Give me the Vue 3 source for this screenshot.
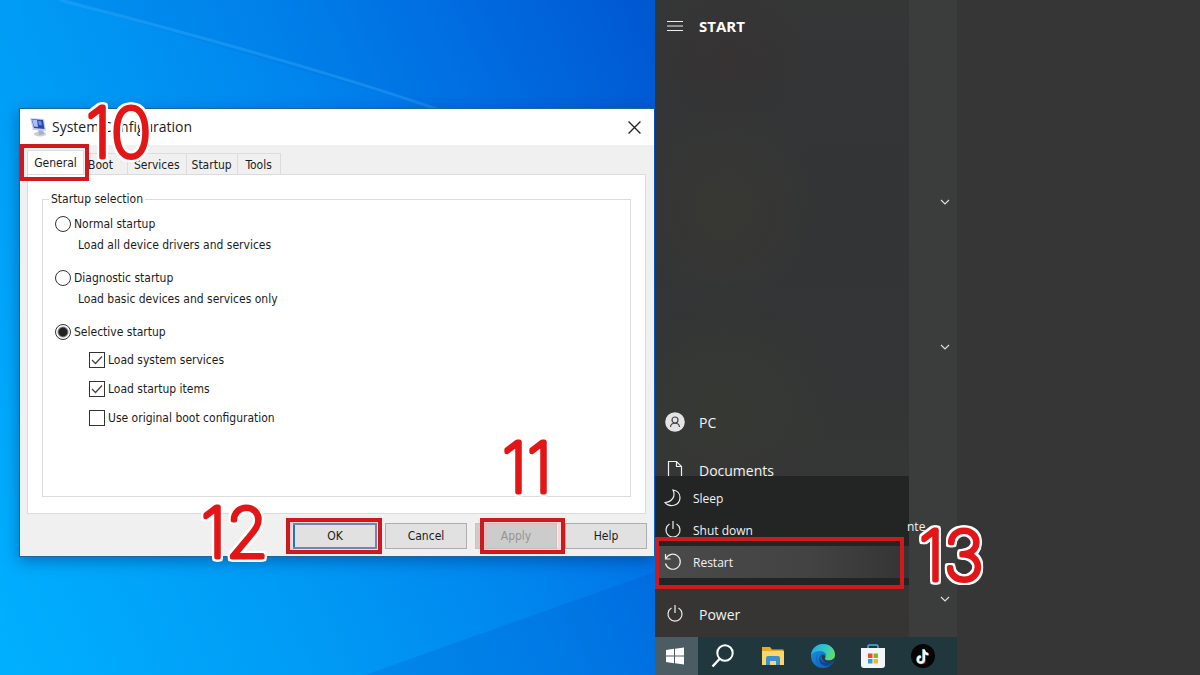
<script setup>
import { ref } from 'vue'

const tabs = ['General', 'Boot', 'Services', 'Startup', 'Tools']
const mode = ref('selective')
const modes = [
  { id: 'normal', label: 'Normal startup', note: 'Load all device drivers and services' },
  { id: 'diagnostic', label: 'Diagnostic startup', note: 'Load basic devices and services only' },
  { id: 'selective', label: 'Selective startup' },
]
const options = ref([
  { id: 'services', label: 'Load system services', on: true },
  { id: 'items', label: 'Load startup items', on: true },
  { id: 'original', label: 'Use original boot configuration', on: false },
])
</script>

<template>
  <main class="screen">
    <section class="desktop">
      <svg class="beam" viewBox="0 0 655 675" preserveAspectRatio="none" aria-hidden="true">
        <path d="M60 0L440 110L655 172V0Z" fill="#004fc4" opacity=".08" />
        <path d="M60 0Q300 62 440 110" fill="none" stroke="#43b5ff" stroke-width="3" opacity=".3" />
        <path d="M365 675L655 572V675Z" fill="#0048c4" opacity=".18" />
      </svg>
      <div class="dialog" role="dialog" aria-labelledby="title">
        <header class="titlebar">
          <svg class="app-icon" viewBox="0 0 18 20" aria-hidden="true">
            <ellipse cx="11" cy="17" rx="6" ry="2.5" fill="#c9cdd6" />
            <path d="M9 12l5-1 1 6-5 1z" fill="#a9b0c0" />
            <path d="M1 1l14 1 2 12-13-1z" fill="#c8d2ee" />
            <path d="M2.500 2l11.500 1 1.500 9-10.500-1z" fill="#2848b4" />
            <path d="M3 2.500l5 .5 1 7-4-.5z" fill="#a9c1f5" />
            <path d="M9 4l3 .3 1 4-3-.3z" fill="#6f91e2" />
          </svg>
          <h1 id="title">System Configuration</h1>
          <button class="close" aria-label="Close">
            <svg viewBox="0 0 12 12"><path d="M.5 .5l11 11M11.500 .5l-11 11" stroke="#222" stroke-width="1.200" /></svg>
          </button>
          <svg class="step step-10"><text x="5" y="62">10</text></svg>
        </header>

        <nav class="tabs" role="tablist">
          <button v-for="(t, i) in tabs" :key="t" role="tab" :class="['tab', { active: i === 0 }]" :aria-selected="i === 0">
            {{ t }}<i v-if="i === 0" class="mark mark-tab"></i>
          </button>
        </nav>

        <div class="page">
          <fieldset>
            <legend>Startup selection</legend>
            <div v-for="m in modes" :key="m.id" class="mode">
              <label class="choice">
                <input v-model="mode" type="radio" name="mode" :value="m.id" />{{ m.label }}
              </label>
              <p v-if="m.note">{{ m.note }}</p>
            </div>
            <div class="options">
              <label v-for="o in options" :key="o.id" class="choice">
                <span class="box">
                  <input v-model="o.on" type="checkbox" />
                  <svg v-if="o.on" viewBox="0 0 16 16" aria-hidden="true"><path d="M3 8l3.500 3.500L13 4.500" fill="none" stroke="#444" stroke-width="1.300" /></svg>
                </span>{{ o.label }}
              </label>
            </div>
          </fieldset>
        </div>

        <footer class="actions">
          <div class="slot"><button class="btn primary">OK</button><i class="mark mark-ok"></i><svg class="step step-12"><text x="5" y="62">12</text></svg></div>
          <div class="slot"><button class="btn">Cancel</button></div>
          <div class="slot"><button class="btn" disabled>Apply</button><i class="mark mark-apply"></i><svg class="step step-11"><text x="5" y="62">11</text></svg></div>
          <div class="slot"><button class="btn">Help</button></div>
        </footer>
      </div>
    </section>

    <section class="start">
      <div class="menu">
        <div class="rail">
          <button class="item head">
            <svg viewBox="0 0 20 20"><path d="M2 5.500h16M2 10h16M2 14.500h16" /></svg>START
          </button>
          <div class="places">
            <button class="item">
              <svg viewBox="0 0 20 20"><circle cx="10" cy="10" r="9.800" fill="#e4e4e4" stroke="none" /><circle cx="10" cy="8" r="3" stroke="#444" /><path d="M5.500 15c.3-5 8.700-5 9 0" stroke="#444" /></svg>PC
            </button>
            <button class="item">
              <svg viewBox="0 0 20 20"><path d="M3.500 19V1.500h8l5 5V19zM11.500 1.500v5h5" /></svg>Documents
            </button>
          </div>
          <button class="item power">
            <svg viewBox="0 0 20 20"><path d="M10 1v8M6.500 4a7 7 0 1 0 7 0" /></svg>Power
          </button>
          <div class="popup" role="menu">
            <button role="menuitem">
              <svg viewBox="0 0 20 20"><path d="M10 2c3 6-1 12-8 12.500C6 20 17 18 17 9.500 17 5 13.500 2.500 10 2z" /></svg>Sleep
            </button>
            <button role="menuitem">
              <svg viewBox="0 0 20 20"><path d="M10 1v8M6.500 4a7 7 0 1 0 7 0" /></svg>Shut down
            </button>
            <button role="menuitem" class="hot">
              <svg viewBox="0 0 20 20"><path d="M3 6.500a7.500 7.500 0 1 1-.5 5M2.500 2v5h5" /></svg>Restart
            </button>
            <i class="mark mark-restart"></i>
          </div>
        </div>
        <div class="tiles">
          <svg class="chev c1" viewBox="0 0 10 6"><path d="M1 1l4 4 4-4" /></svg>
          <svg class="chev c2" viewBox="0 0 10 6"><path d="M1 1l4 4 4-4" /></svg>
          <span class="cut">nte</span>
          <svg class="chev c3" viewBox="0 0 10 6"><path d="M1 1l4 4 4-4" /></svg>
          <svg class="step step-13"><text x="5" y="62">13</text></svg>
        </div>
      </div>
      <nav class="taskbar">
        <button class="task win" aria-label="Start">
          <svg viewBox="0 0 24 24"><path d="M3 6l8-1.200v6.700H3zM12 4.700L21 3.400v8.100h-9zM3 12.500h8v6.700L3 18zM12 12.500h9v8.100l-9-1.300z" fill="#fff" /></svg>
        </button>
        <button class="task" aria-label="Search">
          <svg viewBox="0 0 24 24"><circle cx="14" cy="9" r="7.700" fill="none" stroke="#fff" stroke-width="2" /><path d="M8.500 15L1.500 22.500" stroke="#fff" stroke-width="2.400" /></svg>
        </button>
        <button class="task" aria-label="File Explorer">
          <svg viewBox="0 0 24 24"><path d="M1 3h8l2 2.500h11.500V21H1z" fill="#e9a92d" /><path d="M1 7h22v14H1z" fill="#fbd66f" /><path d="M5 21v-7q0-2 2-2h10q2 0 2 2v7h-4v-4H9v4z" fill="#3c90cf" /></svg>
        </button>
        <button class="task" aria-label="Edge">
          <svg viewBox="0 0 24 24">
            <defs>
              <linearGradient id="edgeTop" x1="0" y1=".3" x2="1" y2=".6"><stop offset="0" stop-color="#2aa9e6" /><stop offset=".55" stop-color="#31c8c8" /><stop offset="1" stop-color="#67db63" /></linearGradient>
              <linearGradient id="edgeBase" x1="0" y1="0" x2="1" y2="1"><stop offset="0" stop-color="#1b95df" /><stop offset="1" stop-color="#1058b0" /></linearGradient>
            </defs>
            <circle cx="12" cy="12" r="12" fill="url(#edgeBase)" />
            <path d="M0 11C1 4 6 0 12 0c7 0 12 5 12 10.500 0 4-3 6-6.500 6-3 0-4-1.200-3.500-2.300C17 10 13 7 9 7 5 7 1.500 8.500 0 11z" fill="url(#edgeTop)" />
            <path d="M9 7.200C4.500 9 4 18 12.500 23.800 6 22.500 4.500 17 5 13c.4-3 2-5 4-5.800z" fill="#0c6fc4" />
            <path d="M10.500 11C7 15 12 21 21.500 18.500 18.500 23 11.500 23 9 18.500 7.500 15.500 8.500 12 10.500 11z" fill="#0b459b" />
            <path d="M14 14.200c-.5 1.100.5 2.300 3.500 2.300 3 0 5.300-1.500 6-3 .2 2-.8 4-2 5C15 20.500 10 17 10.500 11c2-1 4.500 1 3.500 3.200z" fill="#243f4a" />
          </svg>
        </button>
        <button class="task" aria-label="Store">
          <svg viewBox="0 0 24 24"><path d="M7 5V2.500Q7 1 8.500 1h7Q17 1 17 2.500V5" fill="none" stroke="#45b4e8" stroke-width="1.500" /><path d="M0 4h24v17q0 3-3 3H3q-3 0-3-3z" fill="#f3f6f7" /><path d="M7 9.500h4.500V14H7z" fill="#e8502b" /><path d="M12.500 9.500H17V14h-4.500z" fill="#80b927" /><path d="M7 15h4.500v4.500H7z" fill="#2a9fe2" /><path d="M12.500 15H17v4.500h-4.500z" fill="#f8b61c" /></svg>
        </button>
        <button class="task" aria-label="TikTok">
          <svg viewBox="0 0 24 24"><circle cx="12" cy="12" r="12" fill="#050505" /><g fill="none" stroke-width="2.200"><path d="M12.300 5v10.200a3 3 0 1 1-3-3M12.300 5.500c.3 2.500 2 4 4.400 4.200" stroke="#35e0dc" /><path d="M13.500 6v10.200a3 3 0 1 1-3-3M13.500 6.500c.3 2.500 2 4 4.400 4.200" stroke="#ef365b" /><path d="M12.900 5.500v10.200a3 3 0 1 1-3-3M12.900 6c.3 2.500 2 4 4.400 4.200" stroke="#fff" /></g></svg>
        </button>
      </nav>
    </section>
    <aside class="blank"></aside>
  </main>
</template>

<style>
body { margin: 0; }
</style>

<style scoped>
* { box-sizing: border-box; }
button { font: inherit; color: inherit; border: 0; padding: 0; background: none; }
.screen {
  display: grid;
  grid-template-columns: 655fr 302fr 243fr;
  min-height: 100vh;
  overflow: hidden;
  font-family: "Open Sans", "Noto Sans", sans-serif;
}

.desktop {
  position: relative;
  padding: 108px 1px 118px 19px;
  background: linear-gradient(66deg, #00b0ff 0%, #009cf5 32%, #0086ee 58%, #0070e4 78%, #0058d2 100%);
}
.beam { position: absolute; inset: 0; width: 100%; height: 100%; }
.dialog {
  position: relative;
  display: flex;
  flex-direction: column;
  height: 100%;
  background: #f0f0f0;
  border: 1px solid #1d66a0;
  border-right-width: 0;
  box-shadow: 0 4px 14px rgba(0, 30, 90, .4);
  color: #1c1c1c;
  font-family: "DejaVu Sans Condensed", "DejaVu Sans", sans-serif;
  font-size: 12px;
  line-height: 16px;
}
.titlebar {
  position: relative;
  display: flex;
  align-items: center;
  gap: 5px;
  height: 36px;
  padding: 0 13px 0 9px;
  background: #fff;
}
.app-icon { width: 18px; height: 20px; }
h1 { flex: 1; margin: 0; font: 400 14px/20px "Open Sans", sans-serif; }
.close { width: 13px; height: 13px; line-height: 0; }
.close svg { width: 100%; }

.tabs { display: flex; align-items: flex-end; height: 29px; padding-left: 7px; }
.tab { height: 21px; padding: 2px 6px 0; border: 1px solid #dcdcdc; border-width: 1px 1px 0 0; }
.tab:nth-child(2) { width: 44px; padding: 2px 14px 0 4px; }
.tab:nth-child(4) { padding: 2px 5px 0; }
.tab:nth-child(5) { width: 43px; }
.tab.active { position: relative; height: 24px; width: 57px; padding-top: 0; border-left-width: 1px; background: #fff; }
.page { flex: 1; margin: 0 8px 0 7px; padding: 16px 14px; background: #fff; border: 1px solid #dcdcdc; }
fieldset { height: 100%; min-width: 0; margin: 0; padding: 8px 12px; border: 1px solid #dcdcdc; }
legend { margin-left: -6px; padding: 0 2px; }
.choice { display: flex; align-items: center; gap: 3px; height: 17px; }
.mode { height: 54px; }
.mode:nth-of-type(3) { height: 28px; }
.mode p { margin: 5px 0 0 23px; }
input { appearance: none; flex: none; width: 16px; height: 16px; margin: 0; border: 1px solid #333; background: #fff; }
input[type="radio"] { border-radius: 50%; }
input[type="radio"]:checked { background: radial-gradient(circle, #222 4px, #fff 6px); }
.options { display: grid; gap: 12px; margin-left: 34px; }
.box { position: relative; width: 16px; height: 16px; line-height: 0; }
.box svg { position: absolute; inset: 0; pointer-events: none; }

.actions { display: flex; justify-content: flex-end; gap: 8px; padding: 9px 7px 7px; }
.slot { position: relative; }
.btn { display: block; width: 82px; height: 26px; background: #e1e1e1; border: 1px solid #adadad; }
.btn.primary { width: 84px; border: 2px solid #2273b9; }
.btn:disabled { background: #ccc; border-color: #c4c4c4; color: #959595; }

.mark { position: absolute; z-index: 2; border: 4px solid #ce191d; pointer-events: none; }
.mark-tab { inset: -7px -6px -7px -8px; }
.mark-ok { inset: -5px -5px -5px -7px; box-shadow: inset 0 0 0 3px rgba(255, 170, 170, .35); }
.mark-apply { inset: -5px -8px -5px 5px; box-shadow: inset 0 0 0 3px rgba(255, 170, 170, .35); }
.mark-restart { inset: 61px 5px -4px 0; }
.step {
  position: absolute;
  z-index: 3;
  width: 80px;
  height: 80px;
  overflow: visible;
  pointer-events: none;
  filter: drop-shadow(2px 0 #fff) drop-shadow(-2px 0 #fff) drop-shadow(0 2px #fff) drop-shadow(0 -2px #fff);
}
.step text {
  fill: #e21517;
  stroke: #e21517;
  stroke-width: 5px;
  stroke-linejoin: round;
  font: 100 68px Inter, "Open Sans", sans-serif;
}
.step-10 { left: 61px; top: -14px; }
.step-11 { left: 22px; top: -93px; }
.step-12 { left: -97px; top: -28px; }
.step-13 { left: 5px; top: 518px; }

.start {
  display: flex;
  flex-direction: column;
  color: #f2f2f2;
  background: #353636;
}
.menu { flex: 1; display: flex; }
.rail {
  position: relative;
  flex: 1;
  display: flex;
  flex-direction: column;
  background:
    radial-gradient(circle at 70px 210px, rgba(75, 70, 40, .22), transparent 110px),
    radial-gradient(circle at 75px 60px, rgba(65, 40, 40, .18), transparent 80px),
    radial-gradient(circle at 70px 400px, rgba(65, 70, 40, .2), transparent 110px),
    linear-gradient(#353636, #323436 35%, #343636 65%, #373533);
}
.item { display: flex; align-items: center; gap: 14px; height: 48px; padding-left: 10px; font-size: 14px; }
.item svg { width: 20px; height: 20px; }
.head { height: 52px; font-weight: 700; font-size: 15px; color: #fff; }
.rail svg { fill: none; stroke: #eee; stroke-width: 1.2; }
.places { margin-top: auto; margin-bottom: 96px; }
.power { margin-bottom: -1px; }
.popup {
  position: absolute;
  left: 0;
  right: 0;
  bottom: 52px;
  height: 109px;
  padding-top: 6px;
  background: #232424;
}
.popup button { display: flex; align-items: center; gap: 10px; width: 100%; height: 32px; padding-left: 8px; font-size: 12px; }
.popup svg { width: 20px; height: 20px; }
.popup .hot { background: linear-gradient(90deg, #4a4a4a, #434343 60%, #343434); }
.tiles { position: relative; width: 48px; background: #3b3d3d; }
.chev { position: absolute; right: 7px; width: 10px; height: 6px; fill: none; stroke: #ddd; stroke-width: 1.2; }
.c1 { top: 199px; }
.c2 { top: 344px; }
.c3 { top: 596px; }
.cut { position: absolute; top: 519px; left: -2px; font-size: 12px; line-height: 16px; }
.taskbar { display: flex; height: 38px; background: #21373e; }
.task { display: grid; place-items: center; width: 50px; }
.task svg { width: 24px; height: 24px; }
.win { width: 43px; padding-right: 4px; background: #4b5d63; }
.blank { background: #363636; }
</style>
